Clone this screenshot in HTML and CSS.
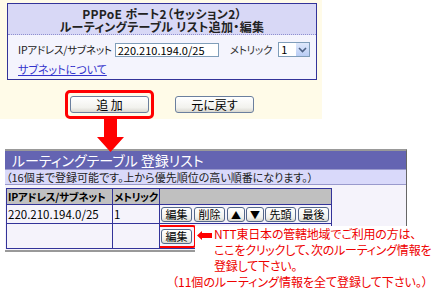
FILE: index.html
```html
<!DOCTYPE html>
<html lang="ja">
<head>
    <meta charset="UTF-8">
    <title>ルーティングテーブル</title>
    <link rel="stylesheet" href="styles.css">
</head>
<body>
    <div class="edit-area">
        <div class="panel">
            <div class="panel-title">PPPoE ポート2（セッション2）<br>ルーティングテーブル リスト追加・編集</div>
            <div class="panel-body">
                <div class="field-row">
                    <span class="field-label">IPアドレス/サブネット</span>
                    <span class="text-box">220.210.194.0/25</span>
                    <span class="field-label metric-label">メトリック</span>
                    <span class="select-box">
                        <span class="select-value">1</span>
                        <span class="select-drop">
                            <svg width="9" height="6" viewBox="0 0 9 6"><path d="M1 1 L4.5 4.5 L8 1" fill="none" stroke="#4d6185" stroke-width="1.6"/></svg>
                        </span>
                    </span>
                </div>
                <a href="#" class="help-link">サブネットについて</a>
            </div>
        </div>
        <div class="actions">
            <span class="mark"><span class="btn btn-wide">追 加</span></span>
            <span class="btn btn-wide">元に戻す</span>
        </div>
    </div>

    <div class="down-arrow">
        <svg width="28" height="36" viewBox="0 0 28 36"><path d="M7 0 H20 V20 H27 L13.5 35 L0 20 H7 Z" fill="#ff0000"/></svg>
    </div>

    <div class="list-panel">
        <div class="list-title">ルーティングテーブル 登録リスト</div>
        <div class="list-note">（16個まで登録可能です。上から優先順位の高い順番になります。）</div>
        <div class="list-body">
            <table class="route-table">
                <colgroup>
                    <col class="col-addr">
                    <col class="col-metric">
                    <col class="col-ops">
                </colgroup>
                <tr class="head">
                    <th>IPアドレス/サブネット</th>
                    <th>メトリック</th>
                    <th></th>
                </tr>
                <tr class="entry-row">
                    <td>220.210.194.0/25</td>
                    <td>1</td>
                    <td class="ops">
                        <span class="btn btn-small">編集</span><span class="btn btn-small">削除</span><span class="btn btn-small btn-icon">▲</span><span class="btn btn-small btn-icon">▼</span><span class="btn btn-small">先頭</span><span class="btn btn-small">最後</span>
                    </td>
                </tr>
                <tr class="new-row">
                    <td></td>
                    <td></td>
                    <td class="ops"><span class="mark mark-small"><span class="btn btn-small">編集</span></span></td>
                </tr>
            </table>
        </div>
    </div>

    <div class="note">
        <div class="note-first">
            <svg class="left-arrow" width="15" height="9" viewBox="0 0 15 9"><path d="M0 4.5 L5 0 V2 H15 V7 H5 V9 Z" fill="#ff0000"/></svg>
            <div class="note-lines">NTT東日本の管轄地域でご利用の方は、<br>ここをクリックして、次のルーティング情報を<br>登録して下さい。</div>
        </div>
        <div class="note-last">（11個のルーティング情報を全て登録して下さい。）</div>
    </div>
</body>
</html>
```

FILE: styles.css
```css
body {
    margin: 0;
    font-family: "Noto Sans CJK JP", "Liberation Sans", sans-serif;
    font-size: 12px;
    font-feature-settings: "palt";
    color: #000;
    background: #fff;
    position: relative;
    width: 433px;
    height: 288px;
    overflow: hidden;
    white-space: nowrap;
}
.edit-area {
    background: #fffbe8;
    width: 322px;
    height: 119px;
    padding: 3px 0 0 7px;
    box-sizing: border-box;
}
.panel {
    width: 310px;
    border: 1px solid #333399;
    box-sizing: border-box;
    background: #f4f4fd;
}
.panel-title {
    background: #d8d8f6;
    border-bottom: 1px dotted #8f8fd0;
    height: 31px;
    padding-top: 3px;
    box-sizing: border-box;
    text-align: center;
    font-weight: bold;
    font-size: 12px;
    letter-spacing: 0.3px;
    line-height: 13px;
    color: #222;
}
.panel-body {
    height: 44px;
    padding: 7px 0 0 10px;
    box-sizing: border-box;
}
.field-row {
    display: flex;
    align-items: center;
    height: 15px;
}
.field-label {
    flex: none;
    font-size: 10.5px;
    letter-spacing: -0.2px;
    line-height: 15px;
    color: #222;
}
.text-box {
    flex: none;
    margin-left: 3px;
    width: 104px;
    height: 14px;
    border: 1px solid #7f9db9;
    background: #fff;
    box-sizing: border-box;
    font-size: 11px;
    line-height: 12px;
    padding-left: 2px;
}
.metric-label {
    margin-left: 11px;
    color: #333;
}
.select-box {
    flex: none;
    margin-left: 6px;
    display: flex;
    width: 32px;
    height: 15px;
    border: 1px solid #7f9db9;
    background: #fff;
    box-sizing: border-box;
}
.select-value {
    flex: 1;
    font-size: 11px;
    line-height: 13px;
    padding-left: 2px;
}
.select-drop {
    width: 13px;
    background: linear-gradient(#dfe8fb, #b9cdf5);
    display: flex;
    align-items: center;
    justify-content: center;
}
.help-link {
    display: inline-block;
    margin-top: 6px;
    font-size: 11px;
    line-height: 12px;
    color: #3333cc;
}
.actions {
    display: flex;
    justify-content: center;
    align-items: center;
    gap: 21px;
    margin-top: 10px;
    margin-left: -10px;
}
.btn {
    display: inline-flex;
    align-items: center;
    justify-content: center;
    box-sizing: border-box;
    border: 1px solid #6b7f9e;
    border-radius: 3px;
    background: linear-gradient(#ffffff, #f2f2ee 70%, #d9d8d0);
    color: #000;
    font-size: 12px;
    vertical-align: top;
}
.btn-wide {
    width: 79px;
    height: 17px;
    line-height: 15px;
}
.mark {
    display: inline-flex;
    border: 3px solid #ff0000;
    border-radius: 5px;
    padding: 3px 2px;
}
.down-arrow {
    position: absolute;
    left: 97px;
    top: 117px;
    line-height: 0;
    z-index: 2;
}
.list-panel {
    margin: 30px 0 0 5px;
    width: 402px;
    border-top: 2px solid #999;
    border-right: 1px solid #666;
    border-bottom: 2px solid #999;
    box-sizing: border-box;
    background: #f5f3fb;
}
.list-title {
    background: #6464b2;
    color: #fff;
    font-size: 14px;
    line-height: 18px;
    height: 18px;
    padding-left: 7px;
}
.list-note {
    background: #d9d9fa;
    border-top: 1px solid #9999cc;
    border-bottom: 1px solid #9999cc;
    font-size: 11px;
    line-height: 14px;
    padding-left: 1px;
    color: #222;
}
.list-body {
    padding: 3px 0 1px 1px;
}
.route-table {
    border-collapse: collapse;
    table-layout: fixed;
    width: 325px;
    border: 1px solid #333399;
}
.col-addr { width: 106px; }
.col-metric { width: 47px; }
.col-ops { width: 172px; }
.route-table th,
.route-table td {
    border: 1px solid #333399;
    padding: 0 0 0 1px;
    text-align: left;
    font-size: 11.5px;
    overflow: hidden;
}
.route-table th {
    background: #c0c0c0;
    height: 15px;
    line-height: 15px;
    font-weight: bold;
    font-size: 10.5px;
    letter-spacing: -0.3px;
}
.entry-row td {
    height: 17px;
    line-height: 17px;
}
.route-table .ops {
    padding: 1px 0 0 1px;
    font-size: 0;
    line-height: 0;
}
.btn-small {
    height: 15px;
    width: 31px;
    margin-right: 2px;
    font-size: 11px;
    line-height: 13px;
    border-color: #54678a;
}
.btn-icon {
    width: 18px;
    margin-right: 1px;
    font-size: 10px;
}
.new-row td {
    height: 20px;
}
.mark-small {
    border-width: 2px;
    border-radius: 3px;
    padding: 2px;
    margin: 0 0 0 -4px;
}
.mark-small .btn-small {
    margin-right: 0;
}
.note {
    position: absolute;
    left: 172px;
    top: 226px;
    width: 261px;
    height: 62px;
    color: #ee0000;
    font-size: 12px;
    line-height: 16px;
}
.note-first {
    display: flex;
    background: #fff;
    margin-left: 23px;
}
.left-arrow {
    margin: 5px 2px 0 2px;
    flex: none;
}
.note-lines {
    letter-spacing: -0.2px;
}
.note-last {
    line-height: 11px;
    margin-top: 2px;
}
```
